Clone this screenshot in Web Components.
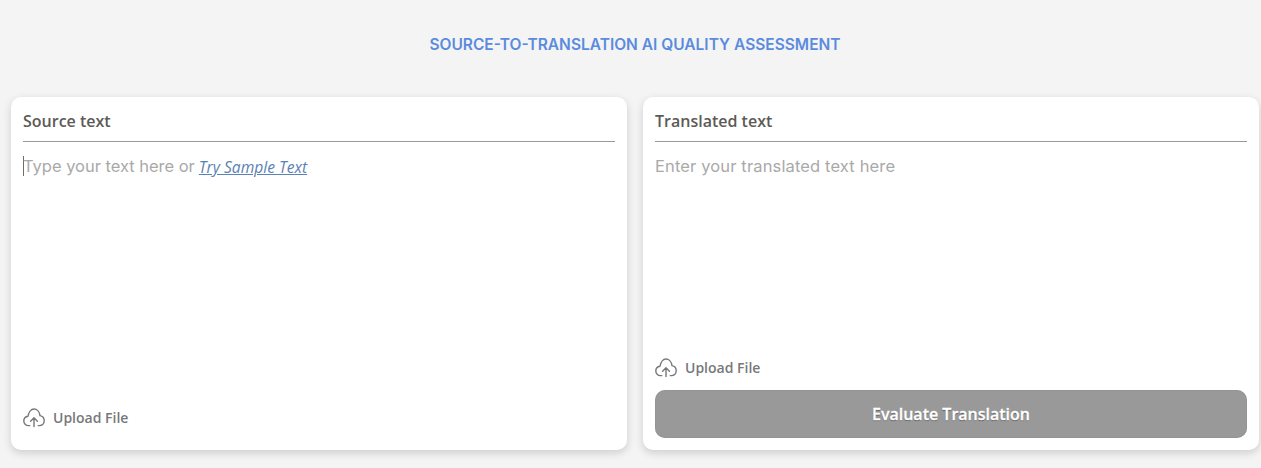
<!DOCTYPE html>
<html>
<head>
<meta charset="utf-8">
<title>Quality Assessment</title>
<style>
html, body { margin: 0; padding: 0; background: #f4f4f4; }
</style>
</head>
<body>
<qa-page>
    <qa-panel label="Source text">
        <qa-caret></qa-caret><qa-hint style="letter-spacing: -0.02px">Type your text here or</qa-hint>
        <qa-sample>Try Sample Text</qa-sample>
        <qa-upload slot="footer" style="margin-bottom: 6px"></qa-upload>
    </qa-panel>
    <qa-panel label="Translated text">
        <qa-hint>Enter your translated text here</qa-hint>
        <qa-upload slot="footer"></qa-upload>
        <qa-button slot="footer">Evaluate Translation</qa-button>
    </qa-panel>
</qa-page>

<script>
class QaPage extends HTMLElement {
    constructor() {
        super();
        const root = this.attachShadow({ mode: 'open' });
        root.innerHTML = `
            <style>
                :host{display: block; height: 468px; box-sizing: border-box; padding: 0 2px 0 11px; background: #f4f4f4;}
                h1{margin: 0; height: 97px; box-sizing: border-box; padding-top: 35px; text-align: center; font: 600 15.5px/20px "Inter", sans-serif; color: #5b8bde;}
                .cols{display: grid; grid-template-columns: 616px 616px; gap: 16px;}
            </style>
            <h1>SOURCE-TO-TRANSLATION AI QUALITY ASSESSMENT</h1>
            <div class="cols"><slot></slot></div>
        `;
    }
}
customElements.define('qa-page', QaPage);

class QaPanel extends HTMLElement {
    constructor() {
        super();
        const root = this.attachShadow({ mode: 'open' });
        root.innerHTML = `
            <style>
                :host{display: flex; flex-direction: column; height: 353px; box-sizing: border-box; padding: 12px; background: #fff; border-radius: 10px; box-shadow: 0 3px 8px rgba(0,0,0,0.16);}
                .label{height: 33px; box-sizing: border-box; border-bottom: 1px solid #999; font: 600 16px/24px "Open Sans", sans-serif; color: #5c5a56;}
                .body{flex: 1; display: flex; align-items: center; align-content: flex-start; flex-wrap: wrap; padding-top: 12px; gap: 4px;}
                .foot{display: flex; flex-direction: column;}
            </style>
            <div class="label"></div>
            <div class="body"><slot></slot></div>
            <div class="foot"><slot name="footer"></slot></div>
        `;
        root.querySelector('.label').textContent = this.getAttribute('label');
    }
}
customElements.define('qa-panel', QaPanel);

class QaHint extends HTMLElement {
    constructor() {
        super();
        const root = this.attachShadow({ mode: 'open' });
        root.innerHTML = `
            <style>
                :host{display: inline-block; font: 400 16.5px/24px "Inter", sans-serif; letter-spacing: 0.14px; color: #a9a9a9;}
            </style>
            <slot></slot>
        `;
    }
}
customElements.define('qa-hint', QaHint);

class QaSample extends HTMLElement {
    constructor() {
        super();
        const root = this.attachShadow({ mode: 'open' });
        root.innerHTML = `
            <style>
                :host{display: inline-block; position: relative; top: 1px; font: italic 400 15.6px/24px "Open Sans", sans-serif; color: #5a82b4; text-decoration: underline; cursor: pointer;}
            </style>
            <slot></slot>
        `;
    }
}
customElements.define('qa-sample', QaSample);

// text cursor in the empty source box, sits over the first letter
class QaCaret extends HTMLElement {
    constructor() {
        super();
        const root = this.attachShadow({ mode: 'open' });
        root.innerHTML = `
            <style>
                :host{display: inline-block; width: 1px; height: 20px; margin-right: -5px; background: #6d6d6d;}
            </style>
        `;
    }
}
customElements.define('qa-caret', QaCaret);

class QaUpload extends HTMLElement {
    constructor() {
        super();
        const root = this.attachShadow({ mode: 'open' });
        root.innerHTML = `
            <style>
                :host{display: flex; align-items: center; gap: 8px; height: 28px; font: 600 14px/20px "Open Sans", sans-serif; color: #77787a; cursor: pointer;}
                svg{width: 22px; height: 20px; flex: none;}
            </style>
            <svg viewBox="0 0 22 20" fill="none" stroke="#77787a" stroke-width="1.4" stroke-linecap="round" stroke-linejoin="round">
                <path d="M6.8 17.6H5.5C2.8 17.6 .8 15.4 .8 12.9C.8 10.4 2.6 8.5 5 8.2C5.6 4.2 8 1 11 1C14 1 16.5 3.8 17 7.6C19.5 8 21.2 10.2 21.2 12.8C21.2 15.4 19.2 17.6 16.5 17.6H15.2"/>
                <path d="M11 18.6V10M7.6 13.2L11 9.8L14.4 13.2"/>
            </svg>
            <span>Upload File</span>
        `;
    }
}
customElements.define('qa-upload', QaUpload);

class QaButton extends HTMLElement {
    constructor() {
        super();
        const root = this.attachShadow({ mode: 'open' });
        root.innerHTML = `
            <style>
                :host{display: flex; align-items: center; justify-content: center; height: 48px; margin-top: 8px; border-radius: 10px; background: #999; font: 600 16px/24px "Open Sans", sans-serif; color: #fff; -webkit-text-stroke: 0.3px #fff; text-shadow: 0 1px 1px rgba(0,0,0,0.4); box-shadow: inset 0 0 1px rgba(0,0,0,0.3);}
            </style>
            <slot></slot>
        `;
    }
}
customElements.define('qa-button', QaButton);
</script>
</body>
</html>
